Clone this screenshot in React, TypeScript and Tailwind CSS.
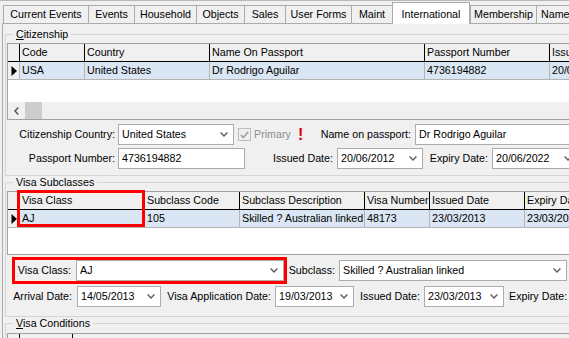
import React from "react";

type Col = { head: string; w: string; cell?: string };

function Chevron() {
  return (
    <svg width="8" height="5" viewBox="0 0 8 5" className="shrink-0">
      <path d="M0.6 0.6 L4 4 L7.4 0.6" fill="none" stroke="#5c5c5c" strokeWidth="1.4" />
    </svg>
  );
}

function Combo({ value, className }: { value: string; className: string }) {
  return (
    <div className={`flex h-[21px] shrink-0 items-center border border-[#acacac] bg-white pl-[3px] pr-[5px] ${className}`}>
      <span className="flex-1 overflow-hidden whitespace-nowrap">{value}</span>
      <Chevron />
    </div>
  );
}

function TextBox({ value, className }: { value: string; className: string }) {
  return (
    <div className={`flex h-[21px] shrink-0 items-center border border-[#acacac] bg-white px-[3px] ${className}`}>
      {value}
    </div>
  );
}

function Label({ text, className }: { text: string; className: string }) {
  return <div className={`shrink-0 whitespace-nowrap text-right ${className}`}>{text}</div>;
}

function DataGrid({ cols, className, scroll }: { cols: Col[]; className: string; scroll?: boolean }) {
  return (
    <div className={`relative flex w-[640px] flex-col border border-[#a0a0a0] bg-white ${className}`}>
      {/* header */}
      <div className="flex h-[18px] shrink-0 border-b border-black bg-[#f0f0f0]">
        <div className="w-[12px] shrink-0 border-r border-black" />
        {cols.map((c) => (
          <div key={c.head} className={`shrink-0 overflow-hidden whitespace-nowrap border-r border-black pl-[2px] leading-[17px] ${c.w}`}>
            {c.head}
          </div>
        ))}
      </div>
      {/* selected row */}
      <div className="flex h-[18px] shrink-0 border-b border-[#b4b4b4] bg-[#dae6f3]">
        <div className="flex w-[12px] shrink-0 items-center justify-center border-r border-[#b4b4b4] bg-[#f0f0f0]">
          <svg width="6" height="10" viewBox="0 0 6 10">
            <path d="M0.5 0 L6 5 L0.5 10 Z" fill="#000" />
          </svg>
        </div>
        {cols.map((c) => (
          <div key={c.head} className={`shrink-0 overflow-hidden whitespace-nowrap border-r border-[#b4b4b4] pl-[2px] leading-[17px] ${c.w}`}>
            {c.cell}
          </div>
        ))}
      </div>
      <div className="flex-1" />
      {scroll && (
        <div className="flex h-[17px] shrink-0 items-center bg-[#f0f0f0]">
          <div className="flex h-full w-[17px] items-center justify-center">
            <svg width="5" height="8" viewBox="0 0 5 8">
              <path d="M4.3 0.5 L1 4 L4.3 7.5" fill="none" stroke="#505050" strokeWidth="1.4" />
            </svg>
          </div>
          <div className="h-full w-[17px] bg-[#cdcdcd]" />
        </div>
      )}
    </div>
  );
}

const tabs = [
  { t: "Current Events", w: "w-[86px] justify-center" },
  { t: "Events", w: "w-[47px] justify-center" },
  { t: "Household", w: "w-[63px] justify-center" },
  { t: "Objects", w: "w-[49px] justify-center" },
  { t: "Sales", w: "w-[42px] justify-center" },
  { t: "User Forms", w: "w-[67px] justify-center" },
  { t: "Maint", w: "w-[42px] justify-center" },
  { t: "International", w: "w-[78px] justify-center", active: true },
  { t: "Membership", w: "w-[67px] justify-center" },
  { t: "Name", w: "w-[60px] justify-start pl-[4px]" },
];

const citizenCols: Col[] = [
  { head: "Code", w: "w-[65px]", cell: "USA" },
  { head: "Country", w: "w-[125px]", cell: "United States" },
  { head: "Name On Passport", w: "w-[215px]", cell: "Dr Rodrigo Aguilar" },
  { head: "Passport Number", w: "w-[125px]", cell: "4736194882" },
  { head: "Issued Date", w: "w-[95px]", cell: "20/06/2012" },
];

const visaCols: Col[] = [
  { head: "Visa Class", w: "w-[125px]", cell: "AJ" },
  { head: "Subclass Code", w: "w-[95px]", cell: "105" },
  { head: "Subclass Description", w: "w-[125px]", cell: "Skilled ? Australian linked" },
  { head: "Visa Number", w: "w-[65px]", cell: "48173" },
  { head: "Issued Date", w: "w-[95px]", cell: "23/03/2013" },
  { head: "Expiry Date", w: "w-[95px]", cell: "23/03/2023" },
];

export default function App() {
  return (
    <div className="h-[338px] w-[569px] overflow-hidden bg-[#f0f0f0] font-['Liberation_Sans',Arial,sans-serif] text-[10.7px] text-black">
      {/* tab strip */}
      <div className="flex h-[23px] items-end border-t border-[#b9b9b9] pl-[3px]">
        {tabs.map((tab) =>
          tab.active ? (
            <div
              key={tab.t}
              className={`relative z-10 -mb-px flex h-[22px] shrink-0 items-start border-x border-t border-[#acacac] bg-white pt-[3px] ${tab.w}`}
            >
              {tab.t}
            </div>
          ) : (
            <div
              key={tab.t}
              className={`-mr-px flex h-[18px] shrink-0 items-center border-x border-t border-[#acacac] bg-[#f0f0f0] ${tab.w}`}
            >
              {tab.t}
            </div>
          )
        )}
      </div>

      {/* tab page */}
      <div className="ml-[2px] h-[400px] border-l border-t border-[#acacac] pl-[2px] pt-[4px]">
        {/* Citizenship */}
        <fieldset className="w-[640px] border border-[#d5d5d5] pb-[6px] pl-[1px]">
          <legend className="ml-[6px] px-[3px] leading-[13px]">
            <span className="underline">C</span>itizenship
          </legend>
          <DataGrid cols={citizenCols} className="mt-[2px] h-[77px]" scroll />

          <div className="mt-[4px] flex h-[21px] items-center">
            <Label text="Citizenship Country:" className="w-[111px] pr-[3px]" />
            <Combo value="United States" className="w-[116px]" />
            <div className="ml-[4px] flex h-[13px] w-[13px] shrink-0 items-center justify-center border border-[#bcbcbc] bg-[#f0f0f0]">
              <svg width="9" height="8" viewBox="0 0 9 8">
                <path d="M0.8 4 L3.4 6.6 L8.2 0.8" fill="none" stroke="#a0a0a0" strokeWidth="1.6" />
              </svg>
            </div>
            <span className="ml-[3px] w-[44px] shrink-0 text-[#8d8d8d]">Primary</span>
            <span className="w-[6px] shrink-0 text-[16px] font-bold leading-[16px] text-[#e00000]">!</span>
            <Label text="Name on passport:" className="w-[111px] pr-[4px]" />
            <TextBox value="Dr Rodrigo Aguilar" className="w-[170px]" />
          </div>

          <div className="mt-[3px] flex h-[21px] items-center">
            <Label text="Passport Number:" className="w-[111px] pr-[3px]" />
            <TextBox value="4736194882" className="w-[127px]" />
            <Label text="Issued Date:" className="w-[92px] pr-[4px]" />
            <Combo value="20/06/2012" className="w-[86px]" />
            <Label text="Expiry Date:" className="w-[69px] pr-[4px]" />
            <Combo value="20/06/2022" className="w-[86px]" />
          </div>
        </fieldset>

        {/* Visa Subclasses */}
        <fieldset className="w-[640px] border border-[#d5d5d5] pb-[9px] pl-[1px]">
          <legend className="ml-[6px] px-[3px] leading-[13px]">Visa Subclasses</legend>
          <div className="relative mt-[2px]">
            <DataGrid cols={visaCols} className="h-[64px]" />
            {/* highlight over the Visa Class column */}
            <div className="pointer-events-none absolute left-[10px] top-[-1px] h-[37px] w-[128px] border-[3px] border-[#ff0000]" />
          </div>

          <div className="mt-[2px] flex h-[27px] items-center">
            <div className="ml-[5px] flex h-[27px] w-[275px] shrink-0 items-center border-[3px] border-[#ff0000]">
              <Label text="Visa Class:" className="w-[61px] pr-[5px]" />
              <Combo value="AJ" className="w-[208px]" />
            </div>
            <Label text="Subclass:" className="w-[52px] pr-[4px]" />
            <Combo value="Skilled ? Australian linked" className="w-[228px]" />
          </div>

          <div className="mt-[2px] flex h-[21px] items-center">
            <Label text="Arrival Date:" className="w-[70px] pr-[5px]" />
            <Combo value="14/05/2013" className="w-[84px]" />
            <Label text="Visa Application Date:" className="w-[114px] pr-[4px]" />
            <Combo value="19/03/2013" className="w-[79px]" />
            <Label text="Issued Date:" className="w-[70px] pr-[4px]" />
            <Combo value="23/03/2013" className="w-[80px]" />
            <span className="shrink-0 whitespace-nowrap pl-[5px]">Expiry Date:</span>
          </div>
        </fieldset>

        {/* Visa Conditions */}
        <fieldset className="w-[640px] border border-[#d5d5d5] pl-[1px]">
          <legend className="ml-[6px] px-[3px] leading-[13px]">
            <span className="underline">V</span>isa Conditions
          </legend>
          <div className="mt-[3px] flex h-[18px] w-[640px] border border-[#a0a0a0] bg-[#f0f0f0]">
            <div className="w-[12px] shrink-0 border-r border-black" />
            <div className="w-[53px] shrink-0 border-r border-black" />
          </div>
        </fieldset>
      </div>
    </div>
  );
}
